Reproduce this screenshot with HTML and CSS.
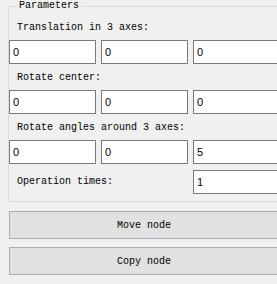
FILE: index.html
```html
<!DOCTYPE html>
<html lang="en">
<head>
    <meta charset="UTF-8">
    <title>Node transform</title>
    <link rel="stylesheet" href="styles.css">
</head>
<body>
    <fieldset class="params">
        <legend>Parameters</legend>

        <div class="label first">Translation in 3 axes:</div>
        <div class="fields">
            <input type="text" value="0">
            <input type="text" value="0">
            <input type="text" value="0">
        </div>

        <div class="label">Rotate center:</div>
        <div class="fields">
            <input type="text" value="0">
            <input type="text" value="0">
            <input type="text" value="0">
        </div>

        <div class="label">Rotate angles around 3 axes:</div>
        <div class="fields">
            <input type="text" value="0">
            <input type="text" value="0">
            <input type="text" value="5">
        </div>

        <div class="fields times">
            <div class="label inline">Operation times:</div>
            <input type="text" value="1">
        </div>
    </fieldset>

    <button class="action">Move node</button>
    <button class="action">Copy node</button>
</body>
</html>
```

FILE: styles.css
```css
html, body {
    overflow: hidden;
}
body {
    margin: 0;
    width: 320px;
    background-color: #f0f0f0;
    font-family: "Liberation Mono", monospace;
    font-size: 10px;
    color: #000;
}
.params {
    margin: 0 0 0 8px;
    padding: 0 0 7px 0;
    border: 1px solid #dcdcdc;
    width: 320px;
}
.params legend {
    margin-left: 8px;
    padding: 0 2px;
    line-height: 12px;
}
.label {
    height: 12px;
    line-height: 12px;
    padding-left: 8px;
    margin: 8px 0 6px;
}
.label.first { margin-top: 10px; }
.label.inline {
    margin: 0;
    width: 176px;
}
.fields {
    display: flex;
    gap: 5px;
}
.fields input {
    box-sizing: border-box;
    width: 87px;
    height: 24px;
    margin: 0;
    padding: 0 3px;
    border: 1px solid #7a7a7a;
    background: white;
    font-family: "Liberation Sans", sans-serif;
    font-size: 11px;
    color: #000;
    outline: none;
}
.times {
    margin-top: 6px;
    align-items: center;
    gap: 0;
}
.action {
    display: block;
    box-sizing: border-box;
    width: 300px;
    height: 28px;
    margin: 9px 0 0 9px;
    padding: 0 0 0 107px;
    border: 1px solid #adadad;
    background-color: #e1e1e1;
    font-family: "Liberation Mono", monospace;
    font-size: 10px;
    color: #000;
    text-align: left;
}
.action + .action { margin-top: 8px; }
```
